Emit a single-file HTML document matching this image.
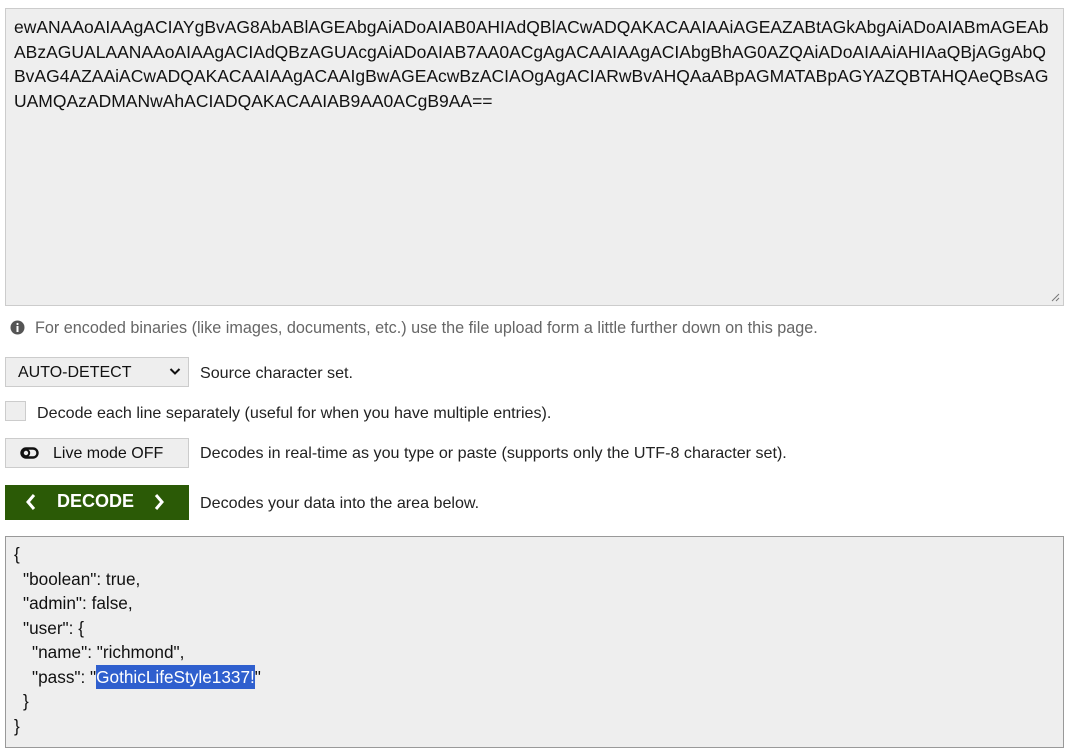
<!DOCTYPE html>
<html><head><meta charset="utf-8"><style>
body{margin:0;width:1070px;height:709px;overflow:hidden;background:#fff;font-family:"Liberation Sans",Arial,sans-serif;color:#111;position:relative}
.abs{position:absolute}
.ta{left:5px;top:8px;width:1041px;height:284px;background:#eee;border:1px solid #ccc;padding:6px 8px;font-size:17.5px;line-height:24.5px;word-break:break-all}
.lbl{font-size:16.1px;color:#222}
.btn{background:#eee;border:1px solid #ccc;box-sizing:border-box}
.out{left:5px;top:536px;width:1041px;height:200px;background:#eee;border:1px solid #999;padding:5px 8px;font-size:17.2px;line-height:24.5px;white-space:pre}
.out div{height:24.5px}
.i1{padding-left:9px}.i2{padding-left:18px}
.sel{background:#2f5fce;color:#fff;padding:2px 0}
</style></head><body>
<div class="abs ta">ewANAAoAIAAgACIAYgBvAG8AbABlAGEAbgAiADoAIAB0AHIAdQBlACwADQAKACAAIAAiAGEAZABtAGkAbgAiADoAIABmAGEAbABzAGUALAANAAoAIAAgACIAdQBzAGUAcgAiADoAIAB7AA0ACgAgACAAIAAgACIAbgBhAG0AZQAiADoAIAAiAHIAaQBjAGgAbQBvAG4AZAAiACwADQAKACAAIAAgACAAIgBwAGEAcwBzACIAOgAgACIARwBvAHQAaABpAGMATABpAGYAZQBTAHQAeQBsAGUAMQAzADMANwAhACIADQAKACAAIAB9AA0ACgB9AA==</div>
<svg class="abs" style="left:1050px;top:292px" width="10" height="10"><path d="M9 2L2 9M9 6L6 9" stroke="#777" stroke-width="1"/></svg>
<svg class="abs" style="left:10px;top:320px" width="15" height="15"><circle cx="7.5" cy="7.5" r="7" fill="#555"/><rect x="6.5" y="6" width="2" height="6" fill="#fff"/><circle cx="7.5" cy="4" r="1.1" fill="#fff"/></svg>
<div class="abs" style="left:35px;top:319px;font-size:16.2px;color:#666">For encoded binaries (like images, documents, etc.) use the file upload form a little further down on this page.</div>
<div class="abs btn" style="left:5px;top:357px;width:184px;height:30px;font-size:16px;padding:6px 0 0 12px">AUTO-DETECT</div>
<svg class="abs" style="left:169px;top:367px" width="12" height="9"><path d="M1.5 2L6 6.5L10.5 2" stroke="#111" stroke-width="2" fill="none"/></svg>
<div class="abs lbl" style="left:200px;top:364px">Source character set.</div>
<div class="abs btn" style="left:5px;top:401px;width:21px;height:20px"></div>
<div class="abs lbl" style="left:37px;top:404px">Decode each line separately (useful for when you have multiple entries).</div>
<div class="abs btn" style="left:5px;top:438px;width:184px;height:30px"></div>
<svg class="abs" style="left:20px;top:446px" width="20" height="14"><rect x="1.5" y="2.5" width="16" height="9" rx="4.5" fill="none" stroke="#111" stroke-width="2.4"/><circle cx="6" cy="7" r="3.2" fill="none" stroke="#111" stroke-width="2"/></svg>
<div class="abs" style="left:53px;top:445px;font-size:16px">Live mode OFF</div>
<div class="abs lbl" style="left:200px;top:444px">Decodes in real-time as you type or paste (supports only the UTF-8 character set).</div>
<div class="abs" style="left:5px;top:485px;width:184px;height:35px;background:#2b5a06"></div>
<svg class="abs" style="left:22px;top:492px" width="160" height="20"><path d="M12 3L6 10L12 17M134 3L140 10L134 17" stroke="#fff" stroke-width="3" fill="none"/></svg>
<div class="abs" style="left:57px;top:491px;font-size:18px;font-weight:bold;color:#fff">DECODE</div>
<div class="abs lbl" style="left:200px;top:494px">Decodes your data into the area below.</div>
<div class="abs out"><div>{</div><div class="i1">"boolean": true,</div><div class="i1">"admin": false,</div><div class="i1">"user": {</div><div class="i2">"name": "richmond",</div><div class="i2">"pass": "<span class="sel">GothicLifeStyle1337!</span>"</div><div class="i1">}</div><div>}</div></div>
</body></html>
